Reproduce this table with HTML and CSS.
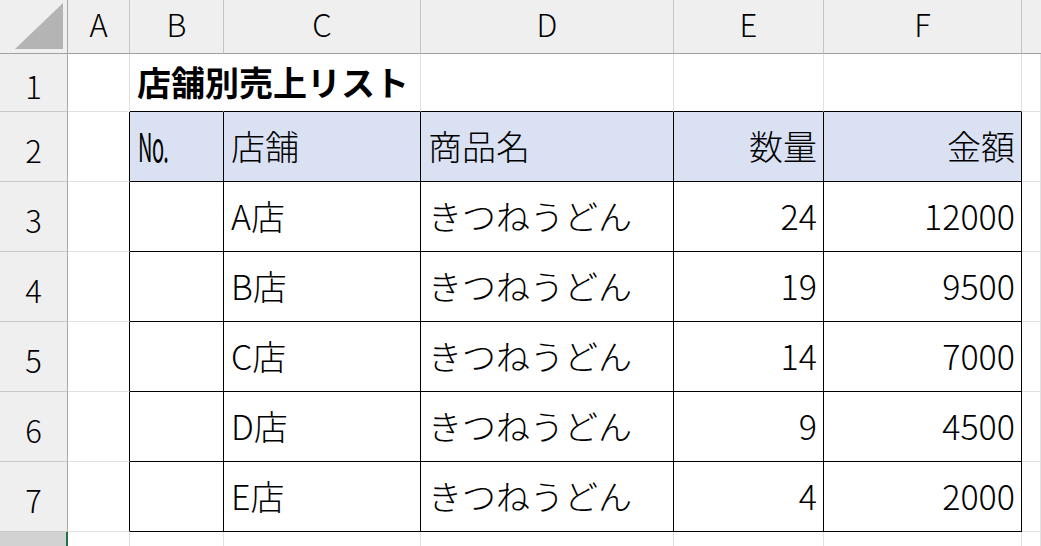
FILE: index.html
```html
<!DOCTYPE html>
<html lang="ja">
<head>
<meta charset="utf-8">
<link rel="stylesheet" href="styles.css">
</head>
<body>
<div class="sheet">
  <div class="corner"><svg class="tri" width="50" height="48" viewBox="0 0 50 48"><polygon points="1,47 49,47 49,1" fill="#b4b4b4"/></svg></div>
  <div class="ch">A</div>
  <div class="ch">B</div>
  <div class="ch">C</div>
  <div class="ch">D</div>
  <div class="ch">E</div>
  <div class="ch">F</div>
  <div class="ch last"></div>

  <div class="rh">1</div>
  <div class="c"></div>
  <div class="c bb nor l"><span class="title">店舗別売上リスト</span></div>
  <div class="c bb"></div>
  <div class="c bb"></div>
  <div class="c bb"></div>
  <div class="c bb"></div>
  <div class="c"></div>

  <div class="rh">2</div>
  <div class="c br"></div>
  <div class="c bk hd l"><span class="no">No.</span></div>
  <div class="c bk hd l">店舗</div>
  <div class="c bk hd l">商品名</div>
  <div class="c bk hd r">数量</div>
  <div class="c bk hd r">金額</div>
  <div class="c"></div>

  <div class="rh">3</div>
  <div class="c br"></div>
  <div class="c bk"></div>
  <div class="c bk l">A店</div>
  <div class="c bk l">きつねうどん</div>
  <div class="c bk r">24</div>
  <div class="c bk r">12000</div>
  <div class="c"></div>

  <div class="rh">4</div>
  <div class="c br"></div>
  <div class="c bk"></div>
  <div class="c bk l">B店</div>
  <div class="c bk l">きつねうどん</div>
  <div class="c bk r">19</div>
  <div class="c bk r">9500</div>
  <div class="c"></div>

  <div class="rh">5</div>
  <div class="c br"></div>
  <div class="c bk"></div>
  <div class="c bk l">C店</div>
  <div class="c bk l">きつねうどん</div>
  <div class="c bk r">14</div>
  <div class="c bk r">7000</div>
  <div class="c"></div>

  <div class="rh">6</div>
  <div class="c br"></div>
  <div class="c bk"></div>
  <div class="c bk l">D店</div>
  <div class="c bk l">きつねうどん</div>
  <div class="c bk r">9</div>
  <div class="c bk r">4500</div>
  <div class="c"></div>

  <div class="rh">7</div>
  <div class="c br"></div>
  <div class="c bk"></div>
  <div class="c bk l">E店</div>
  <div class="c bk l">きつねうどん</div>
  <div class="c bk r">4</div>
  <div class="c bk r">2000</div>
  <div class="c"></div>

  <div class="rh sel"></div>
  <div class="c"></div>
  <div class="c"></div>
  <div class="c"></div>
  <div class="c"></div>
  <div class="c"></div>
  <div class="c"></div>
  <div class="c"></div>
</div>
</body>
</html>
```

FILE: styles.css
```css
html, body {
  margin: 0;
  padding: 0;
  background: #ffffff;
}
body {
  width: 1041px;
  height: 546px;
  overflow: hidden;
  font-family: "Noto Sans CJK JP", "Noto Sans", sans-serif;
  color: #000;
}
.sheet {
  display: grid;
  grid-template-columns: 68px 62px 94px 197px 253px 150px 198px 1fr;
  grid-template-rows: 54px 58px 70px 70px 70px 70px 70px 70px 40px;
  width: 1041px;
  height: 546px;
}
.sheet > div {
  box-sizing: border-box;
  display: flex;
  align-items: center;
  white-space: nowrap;
  min-width: 0;
}
.corner {
  background: #efefef;
  border-right: 1px solid #a8a8a8;
  border-bottom: 1px solid #a0a0a0;
  position: relative;
}
.tri {
  position: absolute;
  left: 14px;
  top: 2px;
}
.ch {
  background: #efefef;
  border-right: 1px solid #c4c4c4;
  border-bottom: 1px solid #a0a0a0;
  justify-content: center;
  font-size: 31px;
  font-weight: 300;
  padding-bottom: 7px;
}
.ch.last {
  border-right: none;
}
.rh {
  background: #efefef;
  border-right: 1px solid #a8a8a8;
  border-bottom: 1px solid #c8c8c8;
  justify-content: center;
  font-size: 31px;
  font-weight: 300;
  padding-top: 6px;
}
.rh.sel {
  background: #d2d2d2;
  border-right: 2px solid #217346;
  border-bottom: none;
}
.c {
  border-right: 1px solid #e1e1e1;
  border-bottom: 1px solid #e1e1e1;
  font-size: 34px;
  font-weight: 300;
  padding-bottom: 3px;
}
.nor {
  border-right-color: transparent !important;
  overflow: visible;
  position: relative;
  z-index: 2;
}
.bb {
  border-bottom-color: #000;
}
.br {
  border-right-color: #000;
}
.bk {
  border-right-color: #000;
  border-bottom-color: #000;
}
.hd {
  background: #d9e1f2;
}
.l {
  justify-content: flex-start;
  padding-left: 7px;
}
.r {
  justify-content: flex-end;
  padding-right: 6px;
}
.title {
  font-weight: 700;
  font-size: 34px;
}
.no {
  display: inline-block;
  font-size: 40px;
  font-weight: 400;
  transform: scaleX(0.5);
  transform-origin: left center;
  margin-left: 1px;
  letter-spacing: -1px;
}
```
